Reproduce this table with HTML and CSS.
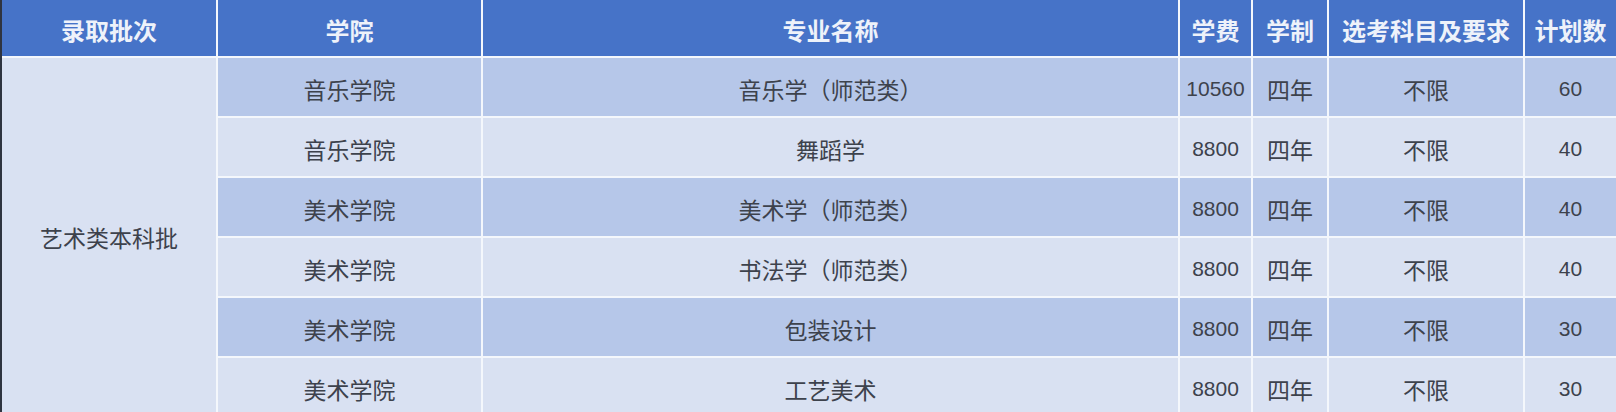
FILE: index.html
```html
<!DOCTYPE html>
<html lang="zh-CN">
<head>
<meta charset="utf-8">
<title>艺术类本科批招生计划</title>
<link rel="stylesheet" href="styles.css">
</head>
<body>
<div class="sheet">
  <div class="row head">
    <div class="cell">录取批次</div>
    <div class="cell">学院</div>
    <div class="cell">专业名称</div>
    <div class="cell">学费</div>
    <div class="cell">学制</div>
    <div class="cell">选考科目及要求</div>
    <div class="cell">计划数</div>
  </div>
  <div class="cell batch">艺术类本科批</div>
  <div class="row dark">
    <div class="cell">音乐学院</div>
    <div class="cell">音乐学（师范类）</div>
    <div class="cell num">10560</div>
    <div class="cell">四年</div>
    <div class="cell">不限</div>
    <div class="cell num">60</div>
  </div>
  <div class="row light">
    <div class="cell">音乐学院</div>
    <div class="cell">舞蹈学</div>
    <div class="cell num">8800</div>
    <div class="cell">四年</div>
    <div class="cell">不限</div>
    <div class="cell num">40</div>
  </div>
  <div class="row dark">
    <div class="cell">美术学院</div>
    <div class="cell">美术学（师范类）</div>
    <div class="cell num">8800</div>
    <div class="cell">四年</div>
    <div class="cell">不限</div>
    <div class="cell num">40</div>
  </div>
  <div class="row light">
    <div class="cell">美术学院</div>
    <div class="cell">书法学（师范类）</div>
    <div class="cell num">8800</div>
    <div class="cell">四年</div>
    <div class="cell">不限</div>
    <div class="cell num">40</div>
  </div>
  <div class="row dark">
    <div class="cell">美术学院</div>
    <div class="cell">包装设计</div>
    <div class="cell num">8800</div>
    <div class="cell">四年</div>
    <div class="cell">不限</div>
    <div class="cell num">30</div>
  </div>
  <div class="row light">
    <div class="cell">美术学院</div>
    <div class="cell">工艺美术</div>
    <div class="cell num">8800</div>
    <div class="cell">四年</div>
    <div class="cell">不限</div>
    <div class="cell num">30</div>
  </div>
</div>
</body>
</html>
```
FILE: styles.css
```css
html, body {
  margin: 0;
  padding: 0;
  background: #ffffff;
  overflow: hidden;
}

.sheet {
  display: grid;
  grid-template-columns: 214px 263px 695px 71px 74px 194px 91px;
  grid-template-rows: 56px repeat(6, 58px);
  gap: 2px;
  background: #f4f7fc;
  border-left: 2px solid #2f3440;
  width: 1614px;
  font-family: "Noto Sans CJK SC", "Noto Sans", sans-serif;
  font-size: 23px;
  color: #3d424c;
}

.row {
  display: contents;
}

.cell {
  display: flex;
  align-items: center;
  justify-content: center;
  padding-top: 4px;
  box-sizing: border-box;
  white-space: nowrap;
}

.head .cell {
  background: #4673c8;
  color: #eef2fa;
  font-weight: 700;
  font-size: 24px;
  padding-top: 2px;
}

.batch {
  grid-column: 1;
  grid-row: 2 / span 6;
  background: #d9e1f2;
  padding-top: 0;
}

.dark .cell {
  background: #b6c7e9;
}

.light .cell {
  background: #d9e1f2;
}

.num {
  font-family: "Liberation Sans", Arial, sans-serif;
  font-size: 21px;
}
```
